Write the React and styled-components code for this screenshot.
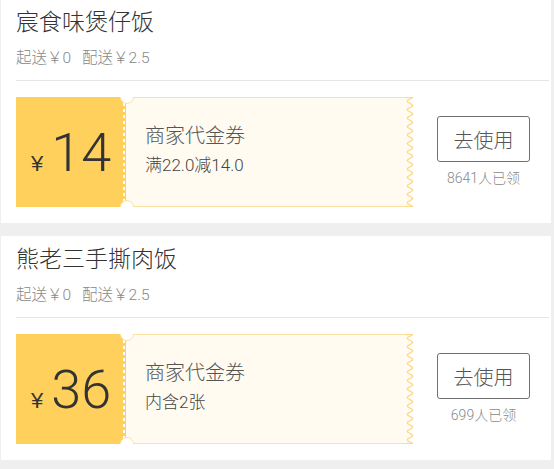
import React from "react";
import styled, { createGlobalStyle } from "styled-components";

const GlobalStyle = createGlobalStyle`
  html, body {
    margin: 0;
    padding: 0;
    background: #efefef;
    font-family: Roboto, "Noto Sans CJK SC", sans-serif;
    overflow: hidden;
  }
`;

const TICKET_H = 110;

const coupons = [
  { shop: "宸食味煲仔饭", amount: 14, rule: "满22.0减14.0", taken: "8641人已领" },
  { shop: "熊老三手撕肉饭", amount: 36, rule: "内含2张", taken: "699人已领" },
];

// wavy right edge of the ticket, one bump every ~8.5px
function wavePoints() {
  const period = TICKET_H / 13;
  const pts = [];
  for (let y = 0; y <= TICKET_H; y += 0.5) {
    const x = 4 + 2.6 * Math.cos((2 * Math.PI * y) / period);
    pts.push(`${x.toFixed(2)},${y}`);
  }
  return pts;
}

function Scallop() {
  const pts = wavePoints();
  return (
    <ScallopSvg width="8" height={TICKET_H} viewBox={`0 0 8 ${TICKET_H}`}>
      <polygon points={`0,0 ${pts.join(" ")} 0,${TICKET_H}`} fill="#fffbf0" />
      <polyline points={`0,0.5 ${pts.join(" ")} 0,${TICKET_H - 0.5}`} fill="none" stroke="#fcd887" strokeWidth="1.4" />
    </ScallopSvg>
  );
}

function CouponCard({ shop, amount, rule, taken }) {
  return (
    <Card>
      <Title>{shop}</Title>
      <Meta>
        <span>起送￥0</span>
        <span>配送￥2.5</span>
      </Meta>
      <Divider />
      <Row>
        <Ticket>
          <Stub>
            <Yen>¥</Yen>
            <Amount>{amount}</Amount>
          </Stub>
          <Body>
            <Name>商家代金券</Name>
            <Rule>{rule}</Rule>
          </Body>
          <Scallop />
          <Notch $top />
          <Notch />
        </Ticket>
        <Action>
          <UseButton>去使用</UseButton>
          <Taken>{taken}</Taken>
        </Action>
      </Row>
    </Card>
  );
}

export default function App() {
  return (
    <>
      <GlobalStyle />
      <Page>
        {coupons.map((c) => (
          <CouponCard key={c.shop} {...c} />
        ))}
      </Page>
    </>
  );
}

const Page = styled.main`
  display: flex;
  flex-direction: column;
  gap: 13px;
  margin-top: -1px;
  width: 554px;
`;

const Card = styled.section`
  background: #fff;
  width: 550px;
  margin-left: 1px;
  box-sizing: border-box;
  padding: 9px 2px 16px 15px;
`;

const Title = styled.h2`
  margin: 0;
  font-size: 23px;
  line-height: 30px;
  font-weight: 300;
  color: #333;
`;

const Meta = styled.div`
  margin-top: 10px;
  display: flex;
  gap: 11px;
  font-size: 15.5px;
  line-height: 20px;
  font-weight: 300;
  color: #888;
`;

const Divider = styled.hr`
  margin: 12px 0 0;
  border: 0;
  height: 1px;
  background: #e5e5e5;
`;

const Row = styled.div`
  margin-top: 16px;
  display: flex;
  align-items: center;
`;

const Ticket = styled.div`
  position: relative;
  display: flex;
  width: 398px;
  height: ${TICKET_H}px;
  overflow: hidden;
`;

const Stub = styled.div`
  position: relative;
  width: 110px;
  flex-shrink: 0;
  display: flex;
  align-items: baseline;
  justify-content: center;
  padding-top: 29px;
  box-sizing: border-box;
  background: #ffd05c;
  color: #333;

  &::after {
    content: "";
    position: absolute;
    right: 1px;
    top: 0;
    bottom: 0;
    width: 2px;
    background: repeating-linear-gradient(to bottom, #fff 0 3px, transparent 3px 6px);
  }
`;

const Yen = styled.span`
  font-family: "Liberation Sans", sans-serif;
  font-size: 22px;
  margin-right: 8px;
`;

const Amount = styled.span`
  font-weight: 300;
  font-size: 54px;
  line-height: 54px;
`;

const Body = styled.div`
  flex: 1;
  display: flex;
  flex-direction: column;
  justify-content: center;
  gap: 6px;
  padding: 0 0 4px 19px;
  background: #fffbf0;
  border-top: 1px solid #fde3a3;
  border-bottom: 1px solid #fde3a3;
`;

const Name = styled.div`
  font-size: 20px;
  line-height: 24px;
  font-weight: 300;
  color: #555;
`;

const Rule = styled.div`
  font-size: 17px;
  line-height: 22px;
  font-weight: 300;
  color: #444;
`;

const ScallopSvg = styled.svg`
  display: block;
  flex-shrink: 0;
`;

const Notch = styled.span`
  position: absolute;
  left: 104px;
  ${(p) => (p.$top ? "top: -7px;" : "bottom: -7px;")}
  width: 12px;
  height: 12px;
  border-radius: 50%;
  background: #fff;
  border: 1px solid #fde3a3;
`;

const Action = styled.div`
  flex: 1;
  display: flex;
  flex-direction: column;
  align-items: center;
  gap: 6px;
  padding-left: 4px;
`;

const UseButton = styled.button`
  width: 93px;
  height: 46px;
  background: #fff;
  border: 1.5px solid #707070;
  border-radius: 3px;
  font-family: inherit;
  font-size: 20px;
  font-weight: 300;
  color: #555;
  cursor: pointer;
`;

const Taken = styled.div`
  font-size: 14px;
  line-height: 20px;
  font-weight: 300;
  color: #888;
`;
